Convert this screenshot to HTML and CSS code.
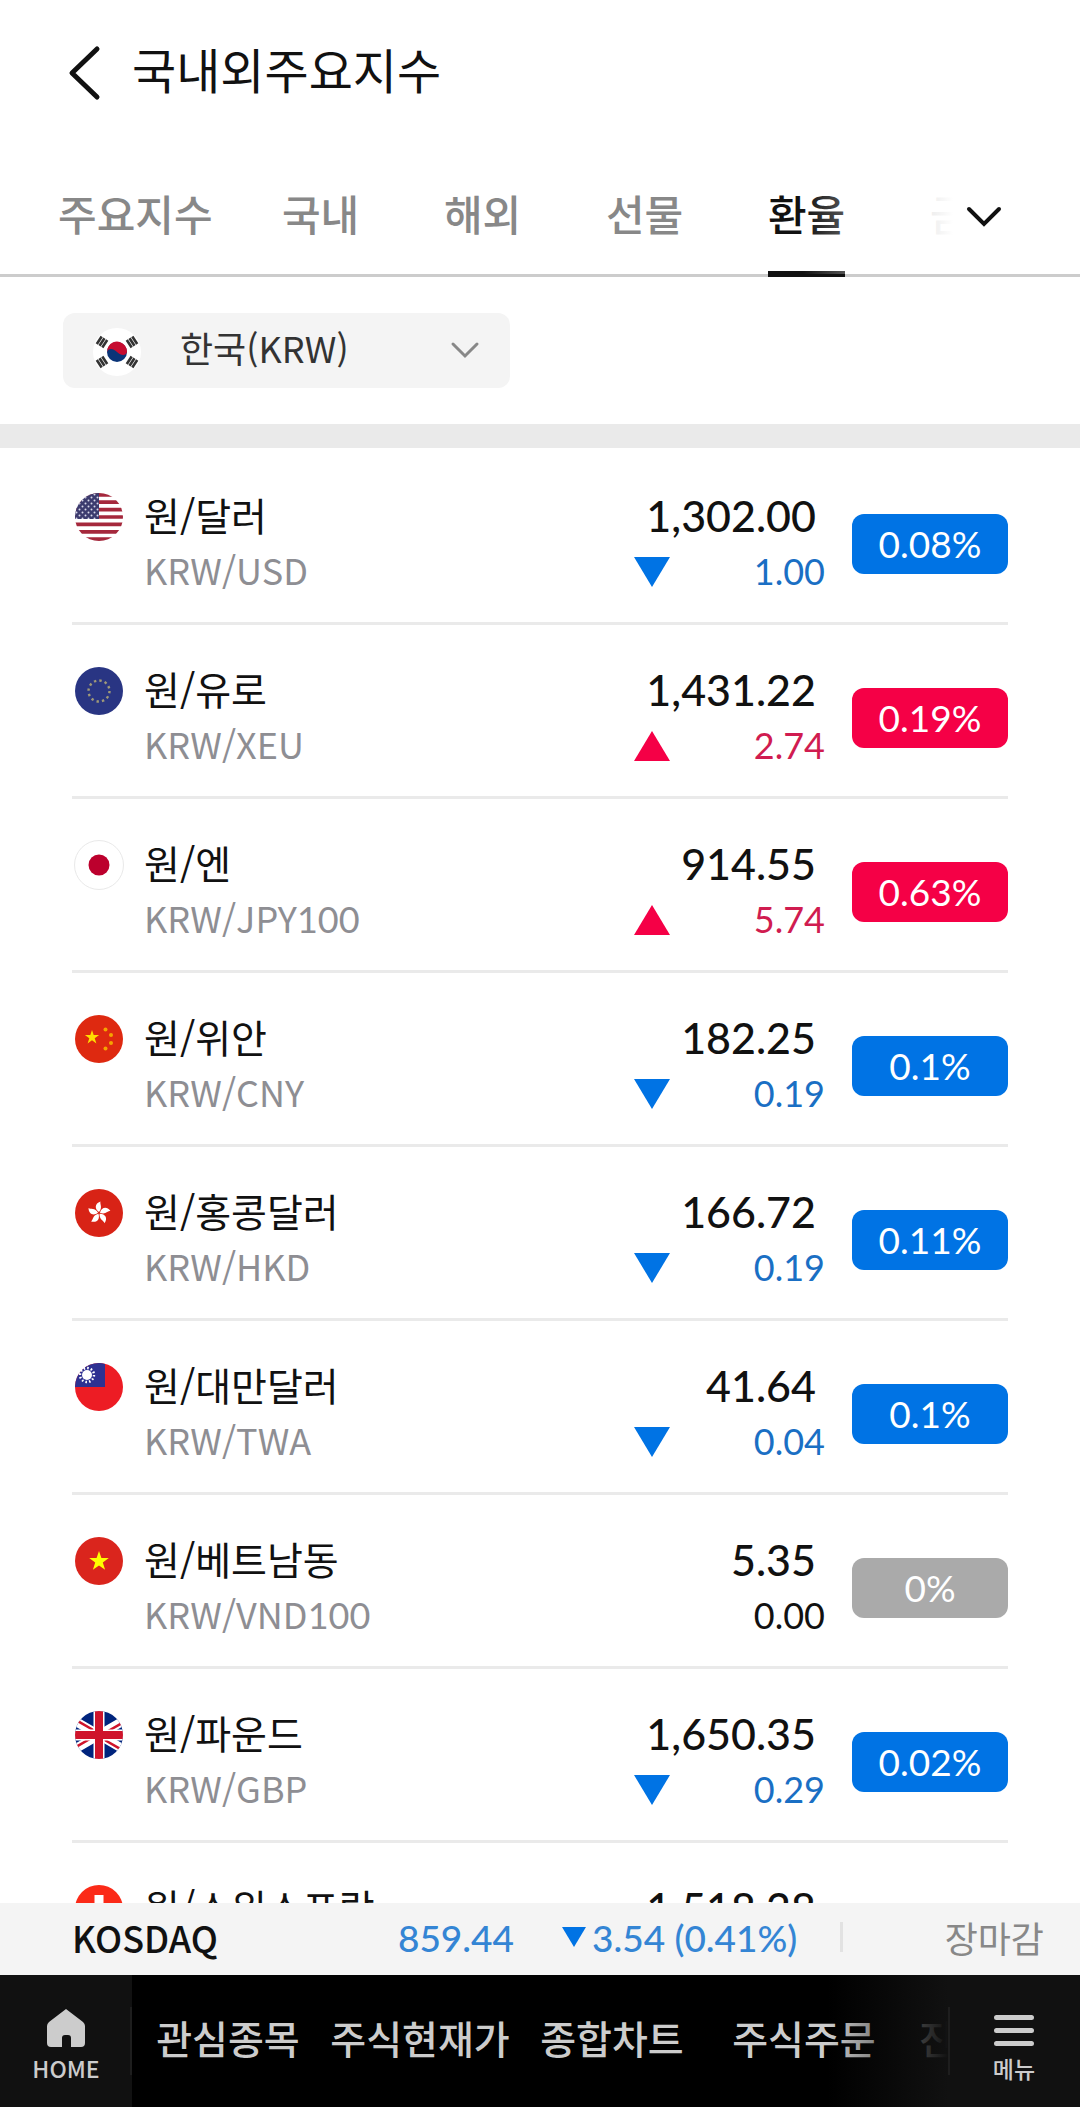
FILE: index.html
```html
<!DOCTYPE html>
<html lang="ko">
<head>
    <meta charset="UTF-8">
    <meta name="viewport" content="width=device-width, initial-scale=1.0">
    <link rel="stylesheet" href="styles.css">
    <title>국내외주요지수</title>
</head>
<body>

    <header class="header">
        <button class="back" type="button" aria-label="뒤로">
            <svg width="34" height="58" viewBox="0 0 34 58"><path d="M30 5 L5 29 L30 53" fill="none" stroke="#111" stroke-width="5" stroke-linecap="round" stroke-linejoin="round"/></svg>
        </button>
        <h1 class="title">국내외주요지수</h1>
    </header>

    <div class="tab-bar">
        <nav class="tabs">
            <a class="tab" href="#main">주요지수</a>
            <a class="tab" href="#domestic">국내</a>
            <a class="tab" href="#overseas">해외</a>
            <a class="tab" href="#futures">선물</a>
            <a class="tab active" href="#exchange"><span>환율</span></a>
            <a class="tab" href="#rates">금리</a>
        </nav>
        <button class="more" type="button" aria-label="전체 탭">
            <svg width="40" height="26" viewBox="0 0 40 26"><path d="M4 5 L19 20 L34 5" fill="none" stroke="#111" stroke-width="4" stroke-linecap="round"/></svg>
        </button>
    </div>

    <div class="filter">
        <div class="select-box">
            <svg class="flag select-flag" viewBox="0 0 48 48">
                <circle cx="24" cy="24" r="24" fill="#fff"/>
                <circle cx="24" cy="24" r="10" fill="#0a3478"/>
                <path d="M15.300 18.700 A10 10 0 0 1 34 24 C33 28 28 28 24 24 C20 20 15 20 14 24 A10 10 0 0 1 15.300 18.700Z" fill="#c60c30"/>
                <g stroke="#333" stroke-width="2.600">
                    <path d="M-3.300 -4.500v9M0 -4.500v9M3.300 -4.500v9" transform="translate(9 14) rotate(33)"/>
                    <path d="M-3.300 -4.500v9M0 -4.500v9M3.300 -4.500v9" transform="translate(39 14) rotate(-33)"/>
                    <path d="M-3.300 -4.500v9M0 -4.500v9M3.300 -4.500v9" transform="translate(9 34) rotate(-33)"/>
                    <path d="M-3.300 -4.500v9M0 -4.500v9M3.300 -4.500v9" transform="translate(39 34) rotate(33)"/>
                </g>
            </svg>
            <select class="select" aria-label="기준 통화">
                <option>한국(KRW)</option>
            </select>
            <svg class="select-arrow" width="30" height="18" viewBox="0 0 30 18"><path d="M3 3 L15 15 L27 3" fill="none" stroke="#888" stroke-width="3" stroke-linecap="round"/></svg>
        </div>
    </div>

    <main class="rates">
        <table class="rate-table">
            <tbody>
                <tr>
                    <td>
                        <div class="currency">
                            <svg class="flag" viewBox="0 0 48 48">
                                <clipPath id="round"><circle cx="24" cy="24" r="24"/></clipPath>
                                <pattern id="stars" width="6" height="6" patternUnits="userSpaceOnUse"><circle cx="1.500" cy="1.500" r="1" fill="#d8d8ea"/><circle cx="4.500" cy="4.500" r="1" fill="#d8d8ea"/></pattern>
                                <g clip-path="url(#round)">
                                    <path fill="#fff" d="M0 0h48v48H0z"/>
                                    <path stroke="#a5283c" stroke-width="3.700" d="M0 1.800h48M0 9.200h48M0 16.600h48M0 24h48M0 31.400h48M0 38.800h48M0 46.200h48"/>
                                    <path fill="#3c3b6e" d="M0 0h24v26H0z"/>
                                    <path fill="url(#stars)" d="M0 0h24v26H0z"/>
                                </g>
                            </svg>
                            <div>
                                <div class="name">원/달러</div>
                                <div class="code">KRW/USD</div>
                            </div>
                        </div>
                    </td>
                    <td class="quote down">
                        <div class="price">1,302.00</div>
                        <div class="change"><svg class="arrow" viewBox="0 0 36 30"><path d="M0 0h36L18 30z"/></svg>1.00</div>
                    </td>
                    <td class="percent"><span class="badge down">0.08%</span></td>
                </tr>
                <tr>
                    <td>
                        <div class="currency">
                            <svg class="flag" viewBox="0 0 48 48">
                                <circle cx="24" cy="24" r="24" fill="#293583"/>
                                <circle cx="24" cy="24" r="10.500" fill="none" stroke="#a09a78" stroke-width="2.400" stroke-dasharray="2.400 3.100"/>
                            </svg>
                            <div>
                                <div class="name">원/유로</div>
                                <div class="code">KRW/XEU</div>
                            </div>
                        </div>
                    </td>
                    <td class="quote up">
                        <div class="price">1,431.22</div>
                        <div class="change"><svg class="arrow" viewBox="0 0 36 30"><path d="M0 30h36L18 0z"/></svg>2.74</div>
                    </td>
                    <td class="percent"><span class="badge up">0.19%</span></td>
                </tr>
                <tr>
                    <td>
                        <div class="currency">
                            <svg class="flag" viewBox="0 0 48 48">
                                <circle cx="24" cy="24" r="24.500" fill="#fff" stroke="#e9e9e9"/>
                                <circle cx="24" cy="24" r="10.500" fill="#bc002d"/>
                            </svg>
                            <div>
                                <div class="name">원/엔</div>
                                <div class="code">KRW/JPY<span class="num">100</span></div>
                            </div>
                        </div>
                    </td>
                    <td class="quote up">
                        <div class="price">914.55</div>
                        <div class="change"><svg class="arrow" viewBox="0 0 36 30"><path d="M0 30h36L18 0z"/></svg>5.74</div>
                    </td>
                    <td class="percent"><span class="badge up">0.63%</span></td>
                </tr>
                <tr>
                    <td>
                        <div class="currency">
                            <svg class="flag" viewBox="0 0 48 48">
                                <circle cx="24" cy="24" r="24" fill="#de2910"/>
                                <path d="M17 15l1.700 5.100h5.400l-4.400 3.200 1.700 5.200-4.400-3.200-4.400 3.200 1.700-5.200-4.400-3.200h5.400z" fill="#ffde00"/>
                                <g fill="#f5a400"><circle cx="30.500" cy="14.500" r="2"/><circle cx="36" cy="20" r="2"/><circle cx="36" cy="28" r="2"/><circle cx="30.500" cy="33.500" r="2"/></g>
                            </svg>
                            <div>
                                <div class="name">원/위안</div>
                                <div class="code">KRW/CNY</div>
                            </div>
                        </div>
                    </td>
                    <td class="quote down">
                        <div class="price">182.25</div>
                        <div class="change"><svg class="arrow" viewBox="0 0 36 30"><path d="M0 0h36L18 30z"/></svg>0.19</div>
                    </td>
                    <td class="percent"><span class="badge down">0.1%</span></td>
                </tr>
                <tr>
                    <td>
                        <div class="currency">
                            <svg class="flag" viewBox="0 0 48 48">
                                <circle cx="24" cy="24" r="24" fill="#d82316"/>
                                <g fill="#fff">
                                    <path id="petal" d="M24 23C19.500 20 19.500 14.500 25.500 12.500C24.500 15 28 18.500 24 23Z"/>
                                    <use href="#petal" transform="rotate(72 24 24)"/>
                                    <use href="#petal" transform="rotate(144 24 24)"/>
                                    <use href="#petal" transform="rotate(216 24 24)"/>
                                    <use href="#petal" transform="rotate(288 24 24)"/>
                                </g>
                            </svg>
                            <div>
                                <div class="name">원/홍콩달러</div>
                                <div class="code">KRW/HKD</div>
                            </div>
                        </div>
                    </td>
                    <td class="quote down">
                        <div class="price">166.72</div>
                        <div class="change"><svg class="arrow" viewBox="0 0 36 30"><path d="M0 0h36L18 30z"/></svg>0.19</div>
                    </td>
                    <td class="percent"><span class="badge down">0.11%</span></td>
                </tr>
                <tr>
                    <td>
                        <div class="currency">
                            <svg class="flag" viewBox="0 0 48 48">
                                <circle cx="24" cy="24" r="24" fill="#ed1c24"/>
                                <path fill="#2e3192" d="M0 24A24 24 0 0 1 24 0Q27 0 30 1V24Z"/>
                                <circle cx="12" cy="12" r="7" fill="none" stroke="#fff" stroke-width="2.400" stroke-dasharray="1.600 2.060"/>
                                <circle cx="12" cy="12" r="5" fill="#fff"/>
                            </svg>
                            <div>
                                <div class="name">원/대만달러</div>
                                <div class="code">KRW/TWA</div>
                            </div>
                        </div>
                    </td>
                    <td class="quote down">
                        <div class="price">41.64</div>
                        <div class="change"><svg class="arrow" viewBox="0 0 36 30"><path d="M0 0h36L18 30z"/></svg>0.04</div>
                    </td>
                    <td class="percent"><span class="badge down">0.1%</span></td>
                </tr>
                <tr>
                    <td>
                        <div class="currency">
                            <svg class="flag" viewBox="0 0 48 48">
                                <circle cx="24" cy="24" r="24" fill="#da251d"/>
                                <path d="M24 14l2.400 7.100h7.400l-6 4.500 2.300 7.200-6.100-4.400-6.100 4.400 2.300-7.200-6-4.500h7.400z" fill="#ff0"/>
                            </svg>
                            <div>
                                <div class="name">원/베트남동</div>
                                <div class="code">KRW/VND<span class="num">100</span></div>
                            </div>
                        </div>
                    </td>
                    <td class="quote">
                        <div class="price">5.35</div>
                        <div class="change">0.00</div>
                    </td>
                    <td class="percent"><span class="badge">0%</span></td>
                </tr>
                <tr>
                    <td>
                        <div class="currency">
                            <svg class="flag" viewBox="0 0 48 48">
                                <g clip-path="url(#round)">
                                    <path fill="#00247d" d="M0 0h48v48H0z"/>
                                    <path stroke="#fff" stroke-width="9" d="M-12 3L60 45M60 3L-12 45"/>
                                    <path stroke="#cf142b" stroke-width="2.500" d="M-6 5L20 20M54 8L28 23M54 43L28 28M-6 40L20 25"/>
                                    <path stroke="#fff" stroke-width="11" d="M24 0v48M0 24h48"/>
                                    <path stroke="#cf142b" stroke-width="8" d="M24 0v48M0 24h48"/>
                                </g>
                            </svg>
                            <div>
                                <div class="name">원/파운드</div>
                                <div class="code">KRW/GBP</div>
                            </div>
                        </div>
                    </td>
                    <td class="quote down">
                        <div class="price">1,650.35</div>
                        <div class="change"><svg class="arrow" viewBox="0 0 36 30"><path d="M0 0h36L18 30z"/></svg>0.29</div>
                    </td>
                    <td class="percent"><span class="badge down">0.02%</span></td>
                </tr>
                <tr>
                    <td>
                        <div class="currency">
                            <svg class="flag" viewBox="0 0 48 48">
                                <circle cx="24" cy="24" r="24" fill="#fb2a18"/>
                                <path stroke="#fff" stroke-width="9" d="M24 10v28M10 24h28"/>
                            </svg>
                            <div>
                                <div class="name">원/스위스프랑</div>
                                <div class="code">KRW/CHF</div>
                            </div>
                        </div>
                    </td>
                    <td class="quote">
                        <div class="price">1,518.28</div>
                        <div class="change">0.00</div>
                    </td>
                    <td class="percent"><span class="badge">0%</span></td>
                </tr>
            </tbody>
        </table>
    </main>

    <div class="ticker">
        <span class="ticker-name">KOSDAQ</span>
        <span class="ticker-price">859.44</span>
        <svg class="ticker-arrow" viewBox="0 0 24 20"><path d="M0 0h24L12 20z"/></svg>
        <span class="ticker-change">3.54 (0.41%)</span>
        <span class="ticker-state">장마감</span>
    </div>

    <footer class="bottom">
        <a class="side home" href="#home">
            <svg width="38" height="40" viewBox="0 0 38 40"><path d="M19 0L36 13Q38 15 38 17V34Q38 38 34 38H24V29Q24 26 21 26H18Q15 26 15 29V38H4Q0 38 0 34V17Q0 15 2 13Z" fill="#ccc"/></svg>
            <span>HOME</span>
        </a>
        <nav class="shortcuts">
            <a href="#watch">관심종목</a>
            <a href="#price">주식현재가</a>
            <a href="#chart">종합차트</a>
            <a href="#order">주식주문</a>
            <a href="#check">진단 차트</a>
        </nav>
        <button class="side menu" type="button">
            <svg width="40" height="31" viewBox="0 0 40 31"><path d="M2.500 2.500h35M2.500 15.500h35M2.500 28.500h35" stroke="#ccc" stroke-width="5" stroke-linecap="round"/></svg>
            <span>메뉴</span>
        </button>
    </footer>

</body>
</html>
```
FILE: styles.css
```css
* {
    box-sizing: border-box;
}

body {
    margin: 0;
    height: 100vh;
    display: flex;
    flex-direction: column;
    background-color: #fff;
    color: #111;
    font-family: "Noto Sans CJK KR", sans-serif;
}

a {
    color: inherit;
    text-decoration: none;
}

button {
    border: none;
    padding: 0;
    background: none;
    font-family: inherit;
    cursor: pointer;
}

svg {
    display: block;
    flex: none;
}

.header {
    display: flex;
    align-items: center;
    gap: 31px;
    height: 146px;
    padding-left: 67px;
}

.title {
    margin: 0;
    padding-bottom: 10px;
    font-size: 48px;
    font-weight: 400;
    line-height: 72px;
}

/* 탭 */
.tab-bar {
    display: flex;
    height: 131px;
    border-bottom: 3px solid #ccc;
}

.tabs {
    position: relative;
    flex: 1;
    min-width: 0;
    display: flex;
    padding: 8px 0 0 31px;
    margin-bottom: -3px;
    overflow: hidden;
}

.tabs::after {
    content: "";
    position: absolute;
    top: 0;
    right: 0;
    bottom: 3px;
    width: 150px;
    background: linear-gradient(to right, rgba(255, 255, 255, 0), #fff);
}

.tab {
    flex: none;
    display: flex;
    justify-content: center;
    min-width: 162px;
    padding: 0 27px;
    color: #888;
    font-size: 42px;
    font-weight: 500;
    line-height: 117px;
    white-space: nowrap;
}

.active {
    color: #111;
}

.active span {
    border-bottom: 6px solid #111;
}

.more {
    width: 127px;
    padding: 14px 0 0 12px;
}

.filter {
    padding: 36px 63px;
    border-bottom: 24px solid #eaeaea;
}

.select-box {
    position: relative;
    width: 447px;
}

.select {
    display: block;
    width: 100%;
    height: 75px;
    padding: 0 60px 8px 117px;
    border: none;
    border-radius: 12px;
    background-color: #f4f4f4;
    color: #333;
    font-family: inherit;
    font-size: 36px;
    appearance: none;
}

.select-flag {
    position: absolute;
    top: 15px;
    left: 30px;
}

.select-arrow {
    position: absolute;
    top: 28px;
    right: 30px;
}

.flag {
    width: 48px;
    height: 48px;
    overflow: visible;
}

/* 환율 목록 */
.rates {
    flex: 1;
    min-height: 0;
    padding: 0 72px;
    overflow: hidden;
}

.rate-table {
    width: 100%;
    border-collapse: separate;
    border-spacing: 0;
}

.rate-table td {
    padding: 37px 0 23px;
    border-bottom: 3px solid #eaeaea;
}

.rate-table tr:first-child td {
    padding-top: 40px;
}

.currency {
    display: flex;
    align-items: flex-start;
    gap: 21px;
    padding-left: 3px;
}

.currency .flag {
    margin-top: 5px;
}

.name {
    font-size: 39px;
    line-height: 52px;
}

.code {
    color: #8e8e93;
    font-size: 36px;
    line-height: 59px;
}

.num,
.quote,
.badge {
    font-family: Lato, "Noto Sans CJK KR", sans-serif;
}

.num {
    line-height: 36px;
}

.quote {
    width: 191px;
}

.price,
.ticker-price,
.ticker-change {
    font-family: "Lato Medium", Lato, "Noto Sans CJK KR", sans-serif;
    font-weight: 500;
}

.price {
    padding-right: 9px;
    font-size: 43px;
    line-height: 56px;
    text-align: right;
}

.change {
    display: flex;
    align-items: center;
    justify-content: flex-end;
    font-size: 36px;
    line-height: 55px;
}

.arrow {
    width: 36px;
    height: 30px;
    margin-right: auto;
}

.down .change {
    color: #1a6fc4;
}

.up .change {
    color: #d01c50;
}

.down .arrow {
    fill: #0073e4;
}

.up .arrow {
    fill: #f50046;
}

.percent {
    width: 183px;
}

.badge {
    display: block;
    margin-left: 27px;
    border-radius: 12px;
    background-color: #aaa;
    color: #fff;
    font-size: 37px;
    line-height: 60px;
    text-align: center;
}

.badge.down {
    background-color: #0073e4;
}

.badge.up {
    background-color: #f50046;
}

/* 지수 티커 */
.ticker {
    display: flex;
    align-items: center;
    height: 72px;
    padding: 0 36px 4px 72px;
    background-color: #f4f4f4;
    font-size: 37px;
}

.ticker-name {
    width: 145px;
    font-size: 36px;
    font-weight: 500;
}

.ticker-price {
    width: 297px;
    text-align: right;
}

.ticker-price,
.ticker-change {
    color: #3485d4;
}

.ticker-arrow {
    width: 24px;
    height: 20px;
    margin: 0 6px 0 48px;
    fill: #0073e4;
}

.ticker-change {
    min-width: 210px;
}

.ticker-state {
    flex: 1;
    margin-left: 38px;
    border-left: 3px solid #e2e2e2;
    color: #888;
    font-size: 36px;
    line-height: 30px;
    text-align: right;
}

.bottom {
    display: flex;
    align-items: stretch;
    height: 132px;
    background-color: #111;
    color: #ccc;
}

.side {
    position: relative;
    flex: none;
    display: flex;
    flex-direction: column;
    align-items: center;
    width: 132px;
    color: #ccc;
    font-size: 23px;
    font-weight: 500;
    line-height: 34px;
}

.side::after {
    content: "";
    position: absolute;
    top: 32px;
    right: 0;
    width: 2px;
    height: 68px;
    background-color: #1e1e1e;
}

.home {
    padding-top: 34px;
}

.home svg {
    margin-bottom: 2px;
}

.menu {
    padding-top: 40px;
}

.menu svg {
    margin-bottom: 5px;
}

.menu::after {
    right: auto;
    left: 0;
}

.shortcuts {
    position: relative;
    flex: 1;
    min-width: 0;
    display: flex;
    overflow: hidden;
    background-color: #000;
}

.shortcuts::after {
    content: "";
    position: absolute;
    top: 0;
    right: 0;
    bottom: 0;
    width: 120px;
    background: linear-gradient(to right, rgba(17, 17, 17, 0), #111);
}

.shortcuts a {
    flex: none;
    width: 192px;
    font-size: 39px;
    font-weight: 500;
    line-height: 124px;
    text-align: center;
    white-space: nowrap;
}
```
